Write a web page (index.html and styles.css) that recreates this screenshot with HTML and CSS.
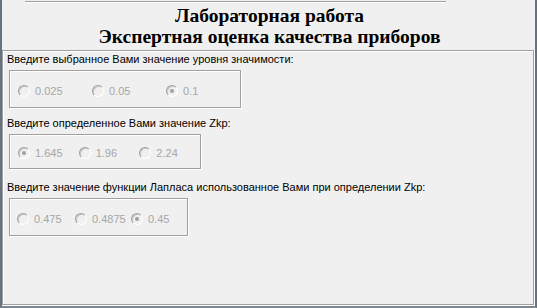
FILE: index.html
```html
<!DOCTYPE html>
<html lang="ru">
<head>
    <meta charset="UTF-8">
    <title>Лабораторная работа</title>
    <link rel="stylesheet" href="styles.css">
</head>
<body>
<div class="window">
    <div class="top-rule"></div>
    <div class="title">
        <div>Лабораторная работа</div>
        <div>Экспертная оценка качества приборов</div>
    </div>

    <div class="panel">
        <div class="question">Введите выбранное Вами значение уровня значимости:</div>
        <div class="group group-alpha">
            <label class="option"><span class="radio"></span>0.025</label>
            <label class="option"><span class="radio"></span>0.05</label>
            <label class="option"><span class="radio checked"></span>0.1</label>
        </div>

        <div class="question">Введите определенное Вами значение Zkp:</div>
        <div class="group group-zkp">
            <label class="option"><span class="radio checked"></span>1.645</label>
            <label class="option"><span class="radio"></span>1.96</label>
            <label class="option"><span class="radio"></span>2.24</label>
        </div>

        <div class="question question-last">Введите значение функции Лапласа использованное Вами при определении Zkp:</div>
        <div class="group group-laplace">
            <label class="option"><span class="radio"></span>0.475</label>
            <label class="option"><span class="radio"></span>0.4875</label>
            <label class="option"><span class="radio checked"></span>0.45</label>
        </div>
    </div>
</div>
</body>
</html>
```

FILE: styles.css
```css
* {
    margin: 0;
    padding: 0;
    box-sizing: border-box;
}

body {
    width: 537px;
    height: 308px;
    background-color: #f0f0f0;
    overflow: hidden;
    font-family: 'Liberation Sans', Arial, sans-serif;
    font-size: 11px;
    color: #000;
}

.window {
    height: 308px;
    border-left: 2px solid #66737f;
    border-right: 2px solid #66737f;
    border-bottom: 2px solid #7c8792;
    padding: 1px 1px 1px 0;
    display: flex;
    flex-direction: column;
}

.top-rule {
    height: 2px;
    margin-left: 23px;
    width: 421px;
    border-top: 1px solid #a0a0a0;
    border-bottom: 1px solid #fff;
}

.title {
    font-family: 'Liberation Serif', 'Times New Roman', serif;
    font-weight: bold;
    font-size: 19.5px;
    line-height: 21px;
    text-align: center;
    padding-left: 3px;
    height: 47px;
    padding-top: 2px;
}

.panel {
    flex: 1;
    border: 1px solid #a0a0a0;
    box-shadow: inset 1px 1px 0 #fff, 1px 1px 0 #fff;
    padding: 1px 0 0 4px;
}

.question {
    height: 16px;
    line-height: 14px;
}

.question-last {
    margin-top: 11px;
}

.group {
    display: flex;
    align-items: center;
    border: 1px solid #a0a0a0;
    box-shadow: inset 1px 1px 0 #fff, 1px 1px 0 #fff;
    margin: 2px 0 8px 2px;
    color: #a6a6a6;
}

.group-alpha {
    width: 232px;
    height: 38px;
    padding: 4px 0 0 8px;
}

.group-alpha .option {
    width: 75px;
}

.group-zkp {
    width: 192px;
    height: 35px;
    padding: 2px 0 0 8px;
}

.group-zkp .option {
    width: 61px;
}

.group-laplace {
    width: 179px;
    height: 38px;
    padding: 4px 0 0 7px;
}

.group-laplace .option:first-child {
    width: 58px;
}

.group-laplace .option {
    width: 56px;
}

.option {
    display: flex;
    align-items: center;
    gap: 5px;
    white-space: nowrap;
}

.radio {
    width: 12px;
    height: 12px;
    border-radius: 50%;
    border: 1px solid;
    border-color: #a0a0a0 #fff #fff #a0a0a0;
    background-color: #f0f0f0;
    box-shadow: inset 1px 1px 0 #c8c8c8;
    display: flex;
    align-items: center;
    justify-content: center;
}

.radio.checked::after {
    content: "";
    width: 4px;
    height: 4px;
    border-radius: 50%;
    background-color: #a0a0a0;
}
```
